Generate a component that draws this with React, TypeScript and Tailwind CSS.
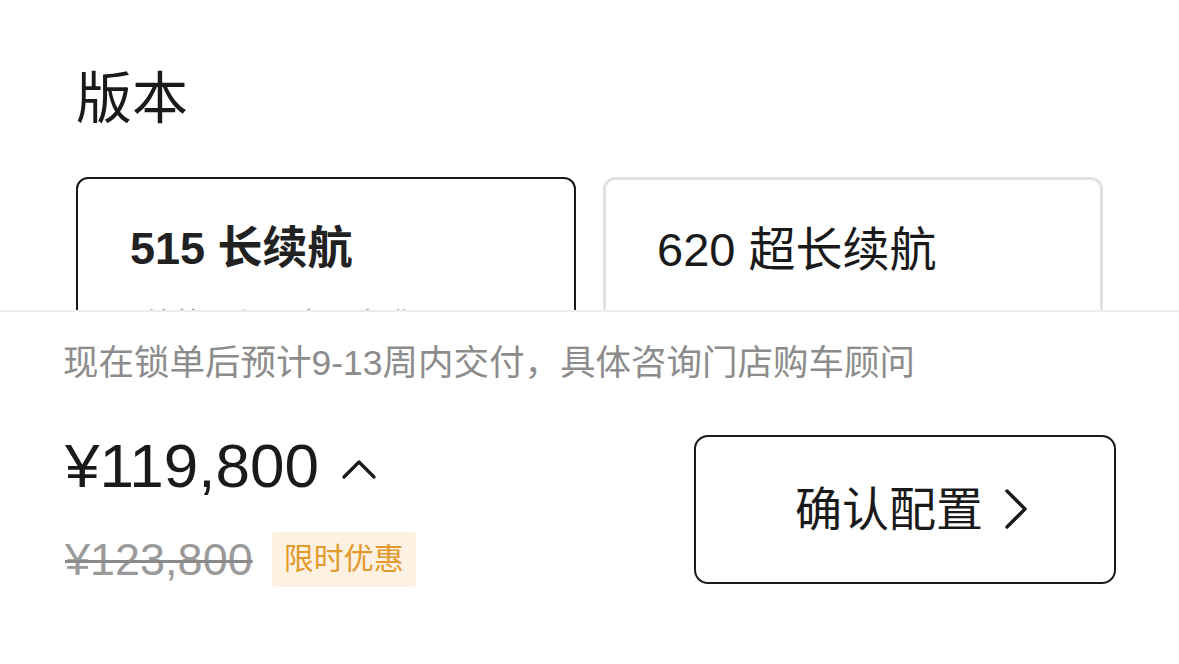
const font = "font-['Liberation_Sans','Noto_Sans_CJK_SC',sans-serif]";

type Version = {
  name: string;
  note: string;
  selected: boolean;
};

const versions: Version[] = [
  { name: "515 长续航", note: "续航里程以实际为准", selected: true },
  { name: "620 超长续航", note: "续航里程以实际为准", selected: false },
];

const ChevronUp = () => (
  <svg width="34" height="24" viewBox="0 0 34 24" fill="none">
    <path d="M2 21 L17 6 L32 21" stroke="#1a1a1a" strokeWidth="3.2" strokeLinecap="round" strokeLinejoin="round" />
  </svg>
);

const ChevronRight = () => (
  <svg width="26" height="40" viewBox="0 0 26 40" fill="none">
    <path d="M4 2 L22 20 L4 38" stroke="#1a1a1a" strokeWidth="3.4" strokeLinecap="round" strokeLinejoin="round" />
  </svg>
);

const App = () => {
  return (
    <div className={`${font} w-[1179px] h-[664px] bg-white overflow-hidden flex flex-col text-[#1a1a1a]`}>
      <section className="h-[310px] shrink-0 overflow-hidden px-[76px] pt-[71px]">
        <h2 className="text-[56px] leading-none font-normal">版本</h2>
        <div className="mt-[50px] grid grid-cols-[500px_500px] gap-[27px]">
          {versions.map((v) => (
            <div
              key={v.name}
              className={
                v.selected
                  ? "h-[200px] rounded-[12px] border-2 border-[#1a1a1a] pl-[52px] pt-[47px]"
                  : "h-[200px] rounded-[12px] border-[3px] border-[#e2e2e2] pl-[51px] pt-[46px]"
              }
            >
              <div className={v.selected ? "text-[45px] leading-none font-semibold text-[#222]" : "text-[47px] leading-none font-normal"}>
                {v.name}
              </div>
              <div className="mt-[38px] pl-[14px] text-[30px] leading-none text-[#9a9a9a]">{v.note}</div>
            </div>
          ))}
        </div>
      </section>

      <section className="flex-1 border-t-2 border-[#ececec] px-[63px] pt-[34px]">
        <p className="text-[35.5px] leading-none text-[#8c8c8c]">现在锁单后预计9-13周内交付，具体咨询门店购车顾问</p>

        <div className="mt-[53px] flex items-start justify-between pl-[2px]">
          <div className="flex flex-col">
            <div className="flex items-center h-[62px]">
              <span className="text-[62px] leading-none">¥119,800</span>
              <span className="ml-[23px] mt-[4px]">
                <ChevronUp />
              </span>
            </div>
            <div className="mt-[35px] flex items-center h-[55px]">
              <span className="text-[45px] leading-none text-[#9a9a9a] line-through decoration-[#8a8a8a] decoration-[3px]">
                ¥123,800
              </span>
              <span className="ml-[19px] h-[55px] flex items-center rounded-[4px] bg-[#fdf2e1] px-[12px] text-[30px] leading-none text-[#e3992c]">
                限时优惠
              </span>
            </div>
          </div>

          <button className="w-[422px] h-[149px] rounded-[14px] border-2 border-[#1a1a1a] bg-white flex items-center justify-center gap-[20px] pl-[14px]">
            <span className="text-[47px] leading-none">确认配置</span>
            <ChevronRight />
          </button>
        </div>
      </section>
    </div>
  );
};

export default App;
